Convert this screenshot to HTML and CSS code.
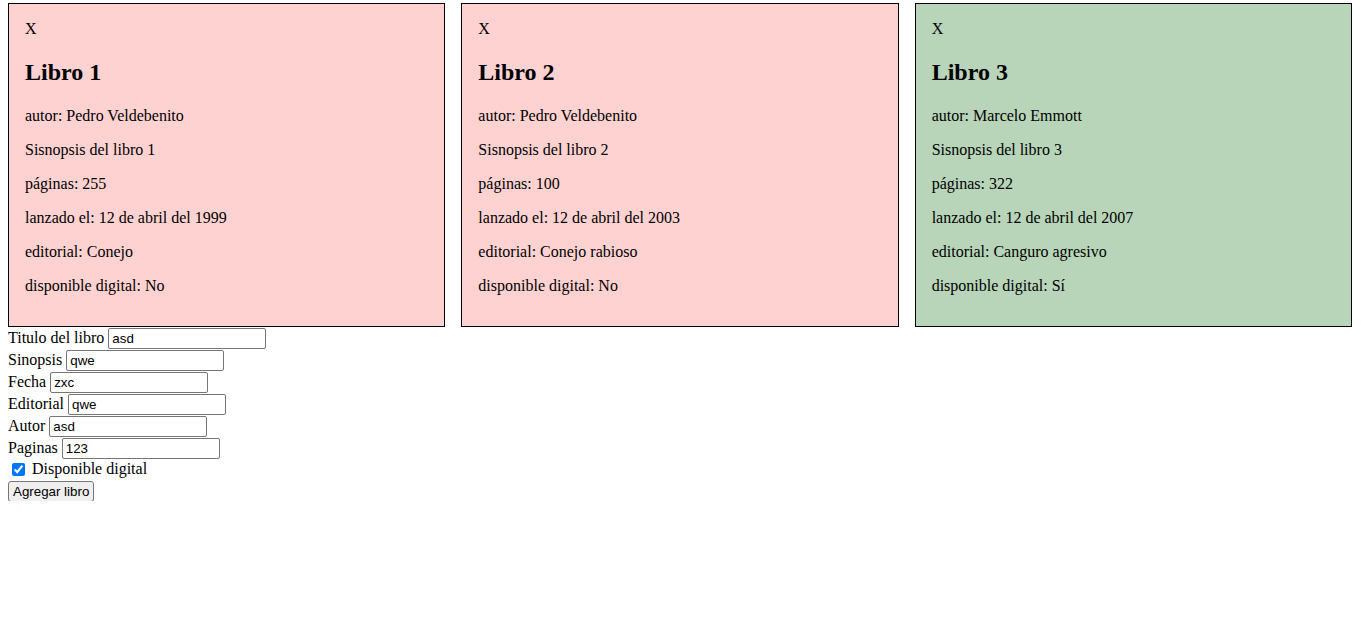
FILE: index.html
```html
<!DOCTYPE html>
<html lang="es">
<head>
<meta charset="utf-8">
<title>Libros</title>
<link rel="stylesheet" href="styles.css">
</head>
<body>
<div class="books">
  <div class="card no">
    <div class="close">X</div>
    <h2>Libro 1</h2>
    <p>autor: Pedro Veldebenito</p>
    <p>Sisnopsis del libro 1</p>
    <p>páginas: 255</p>
    <p>lanzado el: 12 de abril del 1999</p>
    <p>editorial: Conejo</p>
    <p>disponible digital: No</p>
  </div>
  <div class="card no">
    <div class="close">X</div>
    <h2>Libro 2</h2>
    <p>autor: Pedro Veldebenito</p>
    <p>Sisnopsis del libro 2</p>
    <p>páginas: 100</p>
    <p>lanzado el: 12 de abril del 2003</p>
    <p>editorial: Conejo rabioso</p>
    <p>disponible digital: No</p>
  </div>
  <div class="card yes">
    <div class="close">X</div>
    <h2>Libro 3</h2>
    <p>autor: Marcelo Emmott</p>
    <p>Sisnopsis del libro 3</p>
    <p>páginas: 322</p>
    <p>lanzado el: 12 de abril del 2007</p>
    <p>editorial: Canguro agresivo</p>
    <p>disponible digital: Sí</p>
  </div>
</div>
<form class="form">
  <div class="row"><label>Titulo del libro</label> <input class="field" type="text" value="asd"></div>
  <div class="row"><label>Sinopsis</label> <input class="field" type="text" value="qwe"></div>
  <div class="row"><label>Fecha</label> <input class="field" type="text" value="zxc"></div>
  <div class="row"><label>Editorial</label> <input class="field" type="text" value="qwe"></div>
  <div class="row"><label>Autor</label> <input class="field" type="text" value="asd"></div>
  <div class="row"><label>Paginas</label> <input class="field" type="text" value="123"></div>
  <div class="row check"><input class="box" type="checkbox" checked> <label>Disponible digital</label></div>
  <div class="row"><button class="btn" type="button">Agregar libro</button></div>
</form>
</body>
</html>
```

FILE: styles.css
```css
body {
  margin: 3px 8px 8px 8px;
  font-family: "Liberation Serif", "Times New Roman", serif;
  font-size: 16px;
  color: #000;
  background: #fff;
}
.books {
  display: grid;
  grid-template-columns: repeat(3, 1fr);
  gap: 16px;
  margin-right: 2px;
}
.card {
  border: 1px solid #000;
  padding: 16px 16px 15px 16px;
}
.card.no { background: #ffd2d2; }
.card.yes { background: #b8d5b9; }
.close { line-height: 18px; }
.card h2 {
  font-size: 24px;
  font-weight: bold;
  line-height: 29px;
  margin: 20px 0;
}
.card p {
  margin: 16px 0;
  line-height: 18px;
}
.form { margin: 0; }
.row { line-height: 22px; height: 22px; }
.field {
  box-sizing: border-box;
  width: 158px;
  height: 21px;
  padding: 1px 3px;
  border: 1px solid #767676;
  border-radius: 2px;
  font-family: "Liberation Sans", Arial, sans-serif;
  font-size: 13.33px;
  vertical-align: baseline;
  margin: 0;
}
.row.check { height: 20px; line-height: 20px; }
.box {
  margin: 3px 3px 3px 4px;
  accent-color: #0075ff;
  width: 13px;
  height: 13px;
  vertical-align: -2px;
}
.btn {
  font-family: "Liberation Sans", Arial, sans-serif;
  font-size: 13.33px;
  background: #efefef;
  border: 1px solid #767676;
  border-radius: 3px;
  padding: 1px 4px;
  height: 21px;
  margin-top: 2px;
  color: #000;
}
```
